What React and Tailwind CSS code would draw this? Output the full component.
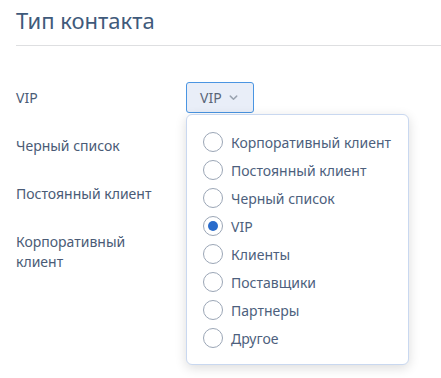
import { useState } from 'react';

const options = [
  'Корпоративный клиент',
  'Постоянный клиент',
  'Черный список',
  'VIP',
  'Клиенты',
  'Поставщики',
  'Партнеры',
  'Другое',
];

const labels = ['VIP', 'Черный список', 'Постоянный клиент', 'Корпоративный клиент'];

const Radio = ({ checked }) => (
  <span className="w-[20px] h-[20px] rounded-full border border-[#9ba6b6] flex items-center justify-center bg-white shrink-0">
    {checked && <span className="w-[10px] h-[10px] rounded-full bg-[#2a6ccb]"></span>}
  </span>
);

const App = () => {
  const [value, setValue] = useState('VIP');

  return (
    <div className="w-[441px] h-[378px] bg-white font-['Noto_Sans',sans-serif] text-[#4a5b76] overflow-hidden">
      {/* Header */}
      <div className="pl-4 pt-[5px]">
        <h1 className="text-[22px] leading-[30px] text-[#3f5a7b]">Тип контакта</h1>
        <div className="mt-[10px] border-t border-[#dedfe1]"></div>
      </div>

      <div className="flex pl-4 pt-[36px]">
        {/* Labels */}
        <div className="w-[170px] text-[14px] leading-[20px]">
          {labels.map((l) => (
            <div key={l} className="h-[48px] pt-[6px]">
              <div className="w-[148px]">{l}</div>
            </div>
          ))}
        </div>

        {/* Select */}
        <div className="relative">
          <button className="h-[31px] pl-[13px] pr-[14px] flex items-center gap-[6px] rounded-[3px] border border-[#4a95e2] bg-[#e9eef8] text-[14px] text-[#5a6577]">
            <span>{value}</span>
            <svg width="11" height="11" viewBox="0 0 12 12" fill="none" stroke="#9aa3b0" strokeWidth="1.6" strokeLinecap="round" strokeLinejoin="round">
              <path d="M2.5 4.5L6 8l3.5-3.5" />
            </svg>
          </button>
          <div className="absolute left-0 top-[32px] w-[223px] rounded-[6px] border border-[#c9d8f0] bg-white shadow-[0_3px_12px_rgba(0,0,0,0.14)] pt-[13px] pb-[12px] px-[16px]">
            {options.map((o) => (
              <div key={o} onClick={() => setValue(o)} className="h-[28px] flex items-center gap-[8px] text-[14px] text-[#4d5f7d] cursor-pointer">
                <Radio checked={o === value} />
                <span>{o}</span>
              </div>
            ))}
          </div>
        </div>
      </div>
    </div>
  );
};

export default App;
